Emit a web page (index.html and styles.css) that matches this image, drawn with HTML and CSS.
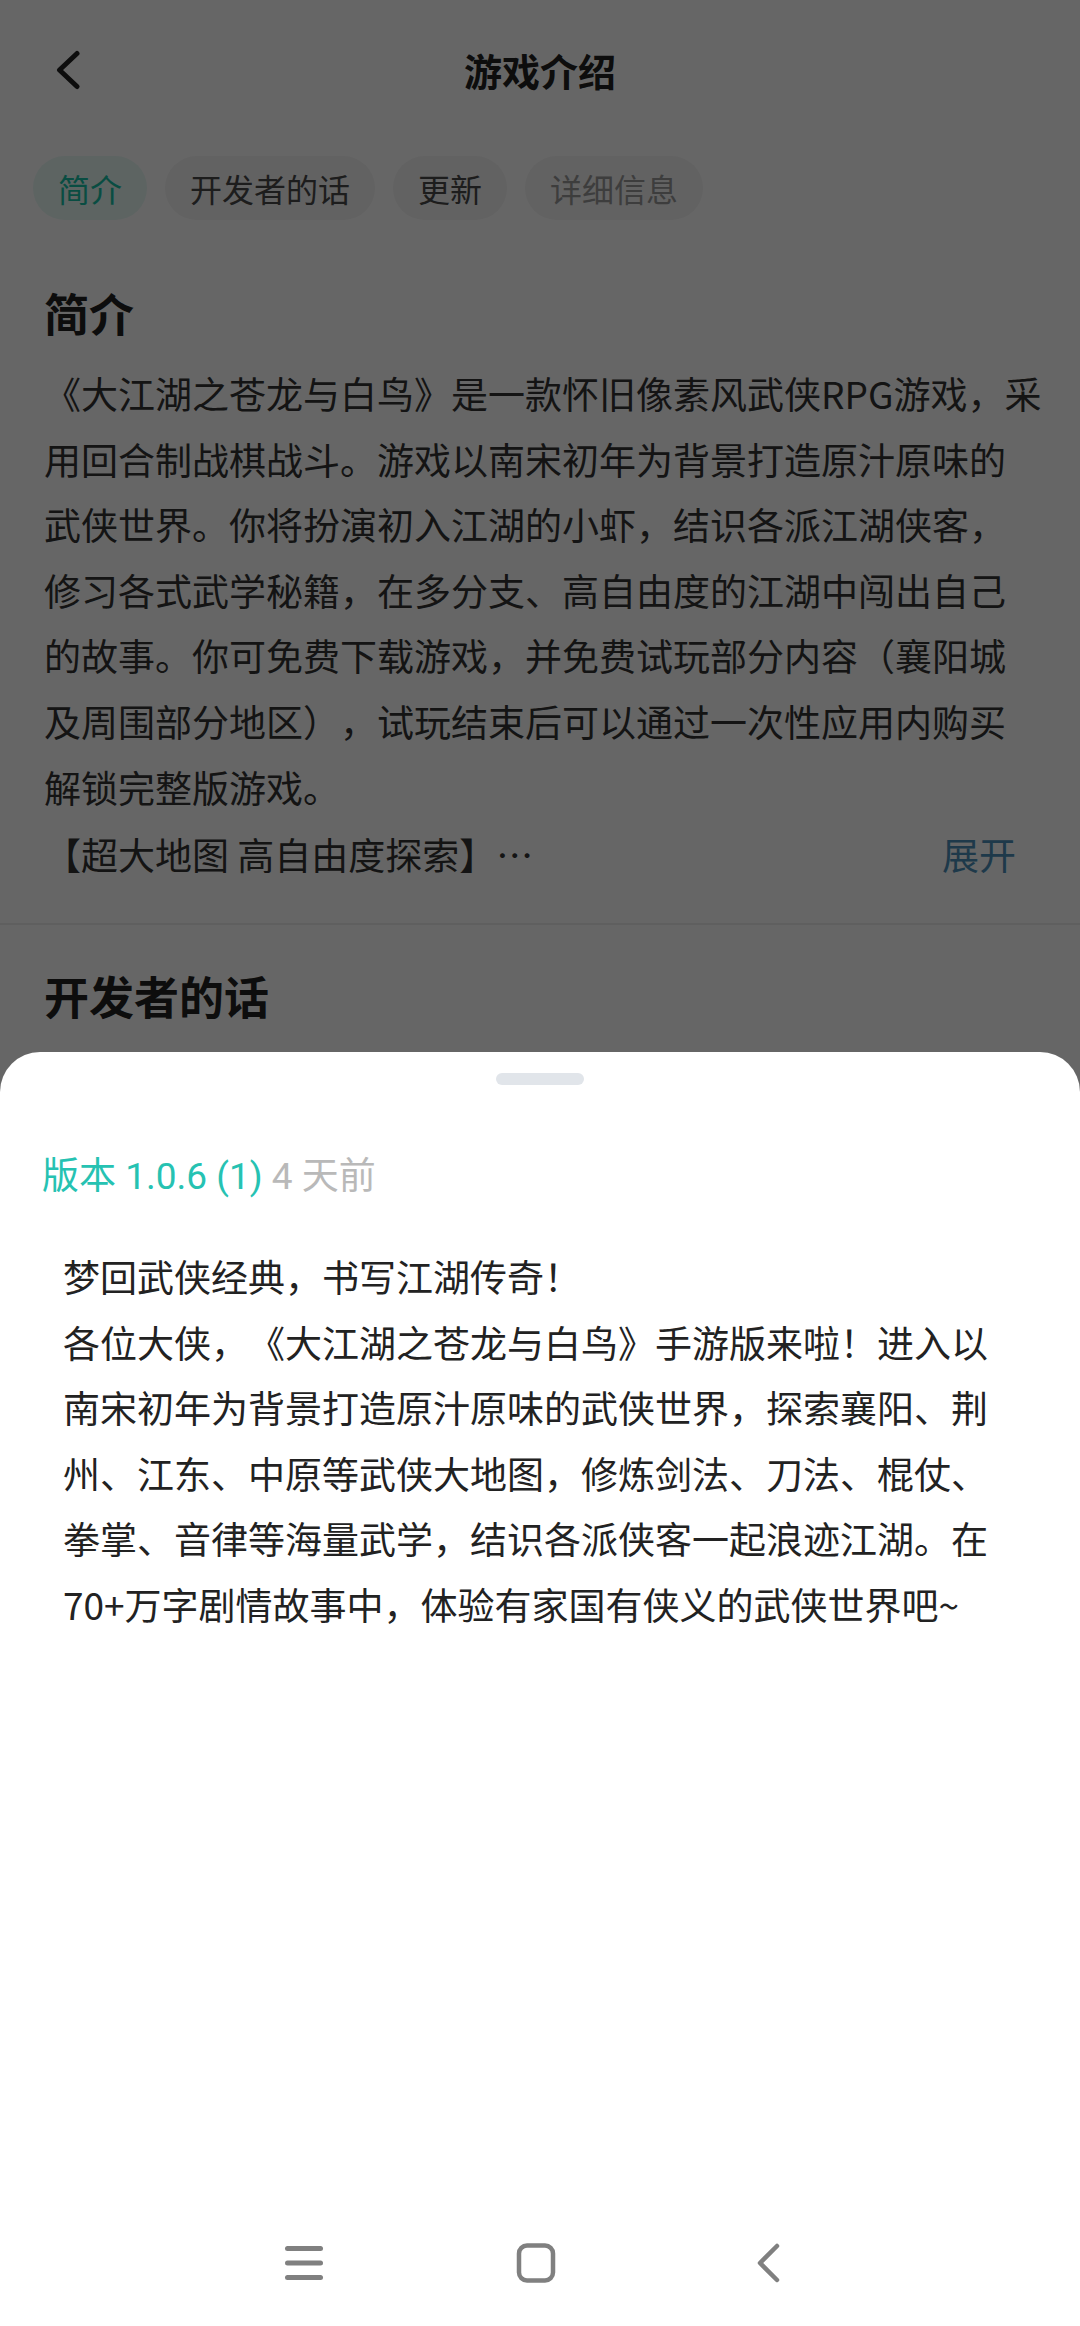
FILE: index.html
```html
<!DOCTYPE html>
<html lang="zh-CN">
<head>
<meta charset="utf-8">
<title>游戏介绍</title>
<link rel="stylesheet" href="styles.css">
</head>
<body>
<div class="page">
  <header class="topbar">
    <div class="topbar-left">
      <svg class="back" width="26" height="40" viewBox="0 0 26 40"><polyline points="22,3.5 4.5,20 22,36.5" fill="none" stroke="#222" stroke-width="5" stroke-linecap="round" stroke-linejoin="round"/></svg>
    </div>
    <h1 class="title">游戏介绍</h1>
    <div class="topbar-right"></div>
  </header>

  <nav class="tabs">
    <span class="tab active">简介</span>
    <span class="tab">开发者的话</span>
    <span class="tab">更新</span>
    <span class="tab muted">详细信息</span>
  </nav>

  <section class="section">
    <h2 class="heading">简介</h2>
    <p class="para">《大江湖之苍龙与白鸟》是一款怀旧像素风武侠RPG游戏，采<br>用回合制战棋战斗。游戏以南宋初年为背景打造原汁原味的<br>武侠世界。你将扮演初入江湖的小虾，结识各派江湖侠客，<br>修习各式武学秘籍，在多分支、高自由度的江湖中闯出自己<br>的故事。你可免费下载游戏，并免费试玩部分内容（襄阳城<br>及周围部分地区），试玩结束后可以通过一次性应用内购买<br>解锁完整版游戏。</p>
    <div class="more-row">
      <span>【超大地图 高自由度探索】…</span>
      <span class="expand">展开</span>
    </div>
  </section>

  <div class="divider"></div>

  <section class="section">
    <h2 class="heading heading-2">开发者的话</h2>
  </section>
</div>

<div class="overlay"></div>

<div class="sheet">
  <div class="handle"></div>
  <div class="version"><span class="ver">版本 1.0.6 (1)</span> <span class="ago">4 天前</span></div>
  <div class="notes">
    <p>梦回武侠经典，书写江湖传奇！</p>
    <p>各位大侠，《大江湖之苍龙与白鸟》手游版来啦！进入以<br>南宋初年为背景打造原汁原味的武侠世界，探索襄阳、荆<br>州、江东、中原等武侠大地图，修炼剑法、刀法、棍仗、<br>拳掌、音律等海量武学，结识各派侠客一起浪迹江湖。在<br>70+万字剧情故事中，体验有家国有侠义的武侠世界吧~</p>
  </div>
  <div class="navbar">
    <span class="nav-slot">
      <svg width="40" height="40" viewBox="0 0 40 40"><g stroke="#808080" stroke-width="5" stroke-linecap="round"><line x1="3.5" y1="5.5" x2="36.5" y2="5.5"/><line x1="3.5" y1="20" x2="36.5" y2="20"/><line x1="3.5" y1="34.5" x2="36.5" y2="34.5"/></g></svg>
    </span>
    <span class="nav-slot">
      <svg width="40" height="40" viewBox="0 0 40 40"><rect x="3" y="2.5" width="34" height="35" rx="8" fill="none" stroke="#808080" stroke-width="4.5"/></svg>
    </span>
    <span class="nav-slot">
      <svg width="26" height="40" viewBox="0 0 26 40"><polyline points="22,3 5,20 22,37" fill="none" stroke="#808080" stroke-width="4.5" stroke-linecap="round" stroke-linejoin="round"/></svg>
    </span>
  </div>
</div>
</body>
</html>
```

FILE: styles.css
```css
html, body {
  margin: 0;
  padding: 0;
}
body {
  width: 1080px;
  height: 2326px;
  overflow: hidden;
  background: #ffffff;
  font-family: "Noto Sans CJK SC", "Noto Sans", sans-serif;
  color: #333;
  position: relative;
  text-spacing-trim: space-all;
}
.page {
  background: #fff;
}
.topbar {
  height: 140px;
  display: grid;
  grid-template-columns: 1fr auto 1fr;
  align-items: center;
}
.topbar-left {
  padding-left: 55px;
  display: flex;
  align-items: center;
}
.back {
  display: block;
  margin-top: -1px;
}
.title {
  margin: 0;
  font-size: 38px;
  font-weight: 700;
  color: #222;
  line-height: 50px;
}
.tabs {
  display: flex;
  gap: 18px;
  padding-left: 33px;
  margin-top: 16px;
}
.tab {
  height: 64px;
  line-height: 64px;
  padding: 0 25px;
  border-radius: 32px;
  background: #f5f5f5;
  font-size: 32px;
  color: #4a4a4a;
}
.tab.active {
  background: #e8faf6;
  color: #17c0a6;
}
.tab.muted {
  color: #9a9a9a;
}
.section {
  padding: 0 30px 0 44px;
}
.heading {
  margin: 63px 0 0 0;
  font-size: 45px;
  line-height: 60px;
  font-weight: 700;
  color: #222;
}
.heading-2 {
  margin-top: 41px;
}
.para {
  margin: 18px 0 0 0;
  font-size: 37px;
  line-height: 65.6px;
  color: #333;
  white-space: nowrap;
}
.more-row {
  display: flex;
  justify-content: space-between;
  font-size: 37px;
  line-height: 65.6px;
  color: #333;
  margin-top: 2px;
  padding-right: 10px;
}
.expand {
  color: #4c8fb9;
  margin-right: 24px;
}
.divider {
  margin-top: 35px;
  height: 2px;
  background: #ededed;
}
.overlay {
  position: absolute;
  inset: 0;
  background: rgba(0, 0, 0, 0.6);
}
.sheet {
  position: absolute;
  top: 1052px;
  left: 0;
  right: 0;
  bottom: 0;
  background: #fff;
  border-radius: 40px 40px 0 0;
  display: flex;
  flex-direction: column;
}
.handle {
  align-self: center;
  width: 88px;
  height: 12px;
  border-radius: 6px;
  background: #e1e5ea;
  margin-top: 21px;
}
.version {
  margin-top: 67px;
  padding-left: 42px;
  font-family: Roboto, "Noto Sans CJK SC", sans-serif;
  font-size: 37px;
  line-height: 50px;
}
.ver {
  color: #26c2b2;
}
.ago {
  color: #b9b9b9;
}
.notes {
  margin-top: 42px;
  padding: 0 40px 0 63px;
  font-size: 37px;
  line-height: 65.6px;
  color: #222;
  white-space: nowrap;
}
.notes p {
  margin: 0;
}
.navbar {
  margin-top: auto;
  height: 126px;
  display: flex;
  justify-content: center;
  align-items: center;
  gap: 172px;
  padding-right: 9px;
}
.nav-slot {
  width: 60px;
  display: flex;
  justify-content: center;
  align-items: center;
}
.nav-slot svg {
  display: block;
}
```
